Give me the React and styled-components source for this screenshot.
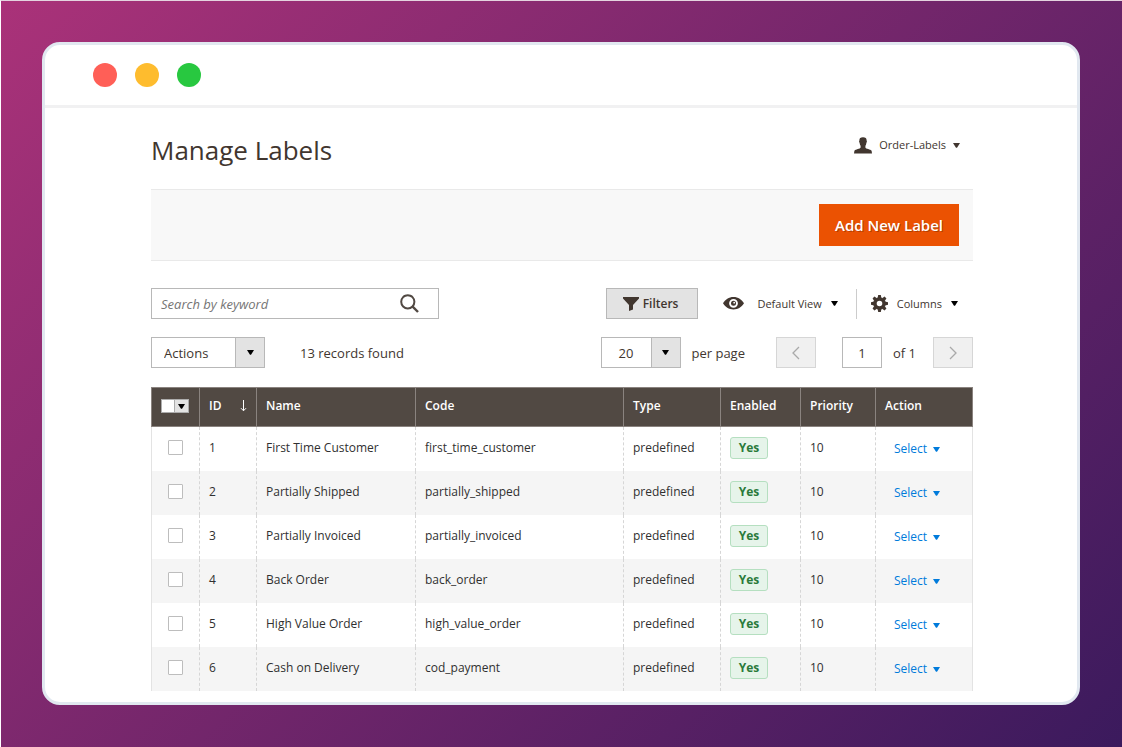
import { useState } from "react";
import styled, { createGlobalStyle, css } from "styled-components";

const labels = [
  { id: 1, name: "First Time Customer", code: "first_time_customer" },
  { id: 2, name: "Partially Shipped", code: "partially_shipped" },
  { id: 3, name: "Partially Invoiced", code: "partially_invoiced" },
  { id: 4, name: "Back Order", code: "back_order" },
  { id: 5, name: "High Value Order", code: "high_value_order" },
  { id: 6, name: "Cash on Delivery", code: "cod_payment" },
];

const columnWidths = [48, 57, 159, 208, 97, 80, 75, 98];

export default function App() {
  const [keyword, setKeyword] = useState("");
  const [page, setPage] = useState("1");
  const [selected, setSelected] = useState([]);

  const onToggle = (id) => {
    setSelected((prev) =>
      prev.includes(id) ? prev.filter((item) => item !== id) : [...prev, id]
    );
  };

  const onToggleAll = (event) => {
    setSelected(event.target.checked ? labels.map((label) => label.id) : []);
  };

  return (
    <>
      <GlobalStyle />
      <Backdrop>
        <Window>
          <TitleBar>
            <Dot $color="#ff5f57" />
            <Dot $color="#febc2e" />
            <Dot $color="#28c840" />
          </TitleBar>

          <Content>
            <PageHeader>
              <Title>Manage Labels</Title>
              <UserButton type="button">
                <UserIcon />
                Order-Labels
                <Caret />
              </UserButton>
            </PageHeader>

            <ActionBar>
              <PrimaryButton type="button">Add New Label</PrimaryButton>
            </ActionBar>

            <Controls>
              <SearchBox>
                <SearchInput
                  type="text"
                  aria-label="Search by keyword"
                  placeholder="Search by keyword"
                  value={keyword}
                  onChange={(event) => setKeyword(event.target.value)}
                />
                <SearchButton type="button" aria-label="Search">
                  <SearchIcon />
                </SearchButton>
              </SearchBox>
              <ViewControls>
                <FilterButton type="button">
                  <FunnelIcon />
                  Filters
                </FilterButton>
                <ViewButton type="button">
                  <EyeIcon />
                  Default View
                  <Caret $dark />
                </ViewButton>
                <ColumnsButton type="button">
                  <GearIcon />
                  Columns
                  <Caret $dark />
                </ColumnsButton>
              </ViewControls>
            </Controls>

            <Pager>
              <SelectBox $width={114}>
                <Select aria-label="Actions" defaultValue="actions">
                  <option value="actions">Actions</option>
                </Select>
                <SelectArrow>
                  <Caret $dark />
                </SelectArrow>
              </SelectBox>
              <Records>13 records found</Records>
              <Paging>
                <SelectBox $width={80}>
                  <Select id="page-size" defaultValue="20" $center>
                    <option value="20">20</option>
                  </Select>
                  <SelectArrow>
                    <Caret $dark />
                  </SelectArrow>
                </SelectBox>
                <PerPage htmlFor="page-size">per page</PerPage>
                <PageButton type="button" aria-label="Previous page" disabled>
                  <ChevronIcon d="M8 1 2 7l6 6" />
                </PageButton>
                <PageInput
                  id="page-number"
                  type="text"
                  value={page}
                  onChange={(event) => setPage(event.target.value)}
                />
                <PageTotal htmlFor="page-number">of 1</PageTotal>
                <PageButton type="button" aria-label="Next page" disabled>
                  <ChevronIcon d="m2 1 6 6-6 6" />
                </PageButton>
              </Paging>
            </Pager>

            <Table>
              <colgroup>
                {columnWidths.map((width, index) => (
                  <col key={index} width={width} />
                ))}
              </colgroup>
              <thead>
                <tr>
                  <HeadCell>
                    <MultiCheck>
                      <MultiCheckInput
                        type="checkbox"
                        aria-label="Select all"
                        checked={selected.length === labels.length}
                        onChange={onToggleAll}
                      />
                      <MultiCheckButton type="button" aria-label="Options">
                        <Caret $dark />
                      </MultiCheckButton>
                    </MultiCheck>
                  </HeadCell>
                  <HeadCell>
                    <Sorted>
                      ID
                      <SortIcon />
                    </Sorted>
                  </HeadCell>
                  <HeadCell>Name</HeadCell>
                  <HeadCell>Code</HeadCell>
                  <HeadCell>Type</HeadCell>
                  <HeadCell>Enabled</HeadCell>
                  <HeadCell>Priority</HeadCell>
                  <HeadCell>Action</HeadCell>
                </tr>
              </thead>
              <tbody>
                {labels.map(({ id, name, code }) => (
                  <Row key={id}>
                    <CheckCell>
                      <Checkbox
                        type="checkbox"
                        aria-label={name}
                        checked={selected.includes(id)}
                        onChange={() => onToggle(id)}
                      />
                    </CheckCell>
                    <Cell>{id}</Cell>
                    <Cell>{name}</Cell>
                    <Cell>{code}</Cell>
                    <Cell>predefined</Cell>
                    <Cell>
                      <Badge>Yes</Badge>
                    </Cell>
                    <Cell>10</Cell>
                    <ActionCell>
                      <RowAction type="button">
                        Select
                        <Caret />
                      </RowAction>
                    </ActionCell>
                  </Row>
                ))}
              </tbody>
            </Table>
          </Content>
        </Window>
      </Backdrop>
    </>
  );
}

function Caret({ $dark }) {
  return (
    <CaretSvg viewBox="0 0 7 5" $dark={$dark} aria-hidden="true">
      <path d="M0 0h7L4 4.800H3z" fill="currentColor" />
    </CaretSvg>
  );
}

function UserIcon() {
  return (
    <svg width="18" height="17" viewBox="0 0 18 17" aria-hidden="true">
      <path
        d="M9 .3C6.500.3 5.300 1.500 5.400 3.500c-.5.300-.4 1.900.2 2.200.2 1.400.5 2.300 1 3v1.800C6.400 12 1.300 12.200.4 13.700L0 16.500h18l-.4-2.800c-.9-1.500-6-1.700-6.200-3.200V8.700c.5-.7.8-1.600 1-3 .6-.3.7-1.900.2-2.200C12.700 1.500 11.500.3 9 .3z"
        fill="#41362f"
      />
    </svg>
  );
}

function SearchIcon() {
  return (
    <svg width="19" height="19" viewBox="0 0 19 19" aria-hidden="true">
      <g fill="none" stroke="#514943">
        <circle cx="7.800" cy="7.800" r="6.600" strokeWidth="2" />
        <path d="m12.400 12.400 5.600 5.600" strokeWidth="2.400" />
      </g>
    </svg>
  );
}

function FunnelIcon() {
  return (
    <svg width="16" height="14" viewBox="0 0 16 14" aria-hidden="true">
      <path d="M0 0h16v1.500L10 8v4.500L6 14V8L0 1.500z" fill="#41362f" />
    </svg>
  );
}

function EyeIcon() {
  return (
    <svg width="21" height="13" viewBox="0 0 21 13" aria-hidden="true">
      <path
        d="M10.500 0C5.800 0 2.200 2.700 0 6.300c2.200 3.500 5.800 6.200 10.500 6.200S18.800 9.800 21 6.300C18.800 2.700 15.200 0 10.500 0zm0 1.900a4.400 4.400 0 1 1 0 8.800 4.400 4.400 0 0 1 0-8.800z"
        fill="#41362f"
        fillRule="evenodd"
      />
      <circle cx="10.500" cy="6.300" r="2.500" fill="#41362f" />
      <circle cx="11.200" cy="5.700" r=".9" fill="#fff" />
    </svg>
  );
}

function GearIcon() {
  const teeth = [0, 45, 90, 135, 180, 225, 270, 315];
  return (
    <svg width="17" height="17" viewBox="0 0 17 17" aria-hidden="true">
      <circle
        cx="8.500"
        cy="8.500"
        r="4.500"
        fill="none"
        stroke="#41362f"
        strokeWidth="3.400"
      />
      {teeth.map((angle) => (
        <path
          key={angle}
          d="M6.600 3 7.200 0h2.600l.6 3z"
          transform={`rotate(${angle} 8.500 8.500)`}
          fill="#41362f"
        />
      ))}
    </svg>
  );
}

function ChevronIcon({ d }) {
  return (
    <svg width="10" height="14" viewBox="0 0 10 14" aria-hidden="true">
      <path d={d} fill="none" stroke="#a9a9a9" strokeWidth="1.300" />
    </svg>
  );
}

function SortIcon() {
  return (
    <svg width="7" height="12" viewBox="0 0 7 12" aria-hidden="true">
      <path
        d="M3.500 0v10.500M1 8.200l2.500 2.600L6 8.200"
        fill="none"
        stroke="#fff"
      />
    </svg>
  );
}

const GlobalStyle = createGlobalStyle`
  * {
    box-sizing: border-box;
  }

  body {
    margin: 0;
    background-color: #fff;
    color: #41362f;
    font-family: "Open Sans", "Noto Sans", sans-serif;
    font-size: 12px;
  }

  button,
  input,
  select {
    margin: 0;
    padding: 0;
    border: 0;
    border-radius: 0;
    background: none;
    color: inherit;
    font: inherit;
  }
`;

const border = css`
  border: 1px solid #b8b8b8;
`;

const Backdrop = styled.div`
  min-height: 100vh;
  padding: 41px 42px 42px 41px;
  border-top: 1px solid #e4d3df;
  border-left: 1px solid #fff;
  background: linear-gradient(135deg, #aa3279, #3b1a5d) border-box;
  background-clip: padding-box;
`;

const Window = styled.div`
  overflow: hidden;
  border: 3px solid #e1e8f0;
  border-radius: 18px;
  background-color: #fff;
`;

const TitleBar = styled.div`
  display: flex;
  gap: 18px;
  padding: 18px 48px;
  border-bottom: 3px solid #f1f1f2;
`;

const Dot = styled.span`
  width: 24px;
  height: 24px;
  border-radius: 50%;
  background-color: ${(props) => props.$color};
`;

const Content = styled.main`
  padding: 24px 104px 11px 106px;
`;

const PageHeader = styled.header`
  display: flex;
  justify-content: space-between;
  align-items: flex-start;
  padding: 0 13px 21px 0;
`;

const Title = styled.h1`
  margin: 0;
  font-size: 26px;
  font-weight: 400;
  line-height: 36px;
`;

const UserButton = styled.button`
  display: flex;
  align-items: center;
  gap: 7px;
  font-size: 11px;
  line-height: 26px;
`;

const CaretSvg = styled.svg`
  flex-shrink: 0;
  width: 7px;
  height: 5px;
  color: ${(props) => (props.$dark ? "#000" : "inherit")};
`;

const ActionBar = styled.div`
  display: flex;
  justify-content: flex-end;
  padding: 14px;
  border-top: 1px solid #e9e9e9;
  border-bottom: 1px solid #e9e9e9;
  background-color: #f8f8f8;
`;

const PrimaryButton = styled.button`
  height: 42px;
  padding: 0 16px;
  background-color: #eb5202;
  color: #fff;
  font-size: 15px;
  font-weight: 600;
  text-shadow: 1px 1px 0 rgba(0, 0, 0, 0.25);
`;

const Controls = styled.div`
  display: flex;
  justify-content: space-between;
  margin-top: 27px;
`;

const SearchBox = styled.div`
  ${border}
  display: flex;
  align-items: center;
  width: 288px;
  height: 31px;
  padding: 0 19px 0 9px;
`;

const SearchInput = styled.input`
  flex: 1;
  min-width: 0;
  outline: none;
  font-size: 13px;

  &::placeholder {
    color: #757575;
    font-style: italic;
  }
`;

const SearchButton = styled.button`
  display: flex;
`;

const ViewControls = styled.div`
  display: flex;
  align-items: center;
  padding-right: 15px;
`;

const FilterButton = styled.button`
  ${border}
  display: flex;
  align-items: center;
  gap: 4px;
  height: 31px;
  padding: 0 19px 0 16px;
  background-color: #e3e3e3;
  font-weight: 600;
`;

const ViewButton = styled.button`
  display: flex;
  align-items: center;
  gap: 9px;
  height: 30px;
  padding: 0 18px 0 25px;
  font-size: 11px;

  & > svg:first-child {
    margin-right: 4px;
  }
`;

const ColumnsButton = styled.button`
  display: flex;
  align-items: center;
  gap: 9px;
  height: 30px;
  padding-left: 14px;
  border-left: 1px solid #ccc;
  font-size: 11px;
`;

const Pager = styled.div`
  display: flex;
  align-items: center;
  margin: 18px 0 19px;
  font-size: 13px;
`;

const SelectBox = styled.div`
  ${border}
  position: relative;
  width: ${(props) => props.$width}px;
  height: 31px;
`;

const Select = styled.select`
  appearance: none;
  width: 100%;
  height: 100%;
  padding: 0 29px 0 ${(props) => (props.$center ? 0 : 12)}px;
  text-align: ${(props) => (props.$center ? "center" : "left")};
`;

const SelectArrow = styled.span`
  position: absolute;
  top: 0;
  right: 0;
  bottom: 0;
  display: flex;
  justify-content: center;
  align-items: center;
  width: 29px;
  border-left: 1px solid #b8b8b8;
  background-color: #e3e3e3;
  pointer-events: none;
`;

const Records = styled.span`
  margin-left: 35px;
`;

const Paging = styled.div`
  display: flex;
  align-items: center;
  margin-left: auto;
`;

const PerPage = styled.label`
  margin: 0 31px 0 11px;
`;

const PageButton = styled.button`
  display: flex;
  justify-content: center;
  align-items: center;
  width: 40px;
  height: 31px;
  border: 1px solid #d6d6d6;
  background-color: #f0f0f0;
`;

const PageInput = styled.input`
  ${border}
  width: 40px;
  height: 31px;
  margin-left: 26px;
  text-align: center;
`;

const PageTotal = styled.label`
  margin: 0 17px 0 11px;
`;

const Table = styled.table`
  width: 100%;
  border-spacing: 0;
  table-layout: fixed;
  color: #303030;
  line-height: 22px;
`;

const HeadCell = styled.th`
  padding: 7px 9px 9px;
  border: 1px solid #8a837f;
  border-width: 1px 0 1px 1px;
  background-color: #514943;
  color: #fff;
  font-weight: 600;
  text-align: left;

  &:last-child {
    border-right-width: 1px;
  }
`;

const Sorted = styled.div`
  display: flex;
  justify-content: space-between;
  align-items: center;
`;

const MultiCheck = styled.div`
  display: flex;
  width: 28px;
  height: 14px;
  border: 1px solid #adadad;
  background-color: #fff;
`;

const MultiCheckInput = styled.input`
  appearance: none;
  flex: 1;

  &:checked {
    background-color: #514943;
  }
`;

const MultiCheckButton = styled.button`
  display: flex;
  justify-content: center;
  align-items: center;
  width: 14px;
  border-left: 1px solid #adadad;
  background-color: #e3e3e3;
`;

const Row = styled.tr`
  &:nth-child(even) {
    background-color: #f5f5f5;
  }
`;

const Cell = styled.td`
  height: 44px;
  padding: 10px 9px 12px;
  border-left: 1px dashed #d6d6d6;
  vertical-align: top;

  &:first-child {
    border-left: 1px solid #e3e3e3;
  }

  &:last-child {
    border-right: 1px solid #e3e3e3;
  }
`;

const CheckCell = styled(Cell)`
  padding: 13px 16px;
  line-height: 0;
`;

const Checkbox = styled.input`
  appearance: none;
  width: 15px;
  height: 15px;
  border: 1px solid #bdbdbd;
  border-radius: 1px;
  background-color: #fff;

  &:checked {
    background-color: #514943;
  }
`;

const ActionCell = styled(Cell)`
  padding: 11px 18px;
`;

const Badge = styled.span`
  display: block;
  width: 38px;
  height: 22px;
  border: 1px solid #b5dfc0;
  border-radius: 3px;
  background-color: #e6f4ea;
  color: #2a7a3b;
  font-weight: 700;
  line-height: 20px;
  text-align: center;
`;

const RowAction = styled.button`
  display: flex;
  align-items: center;
  gap: 6px;
  color: #007bdb;
  line-height: 22px;
`;
